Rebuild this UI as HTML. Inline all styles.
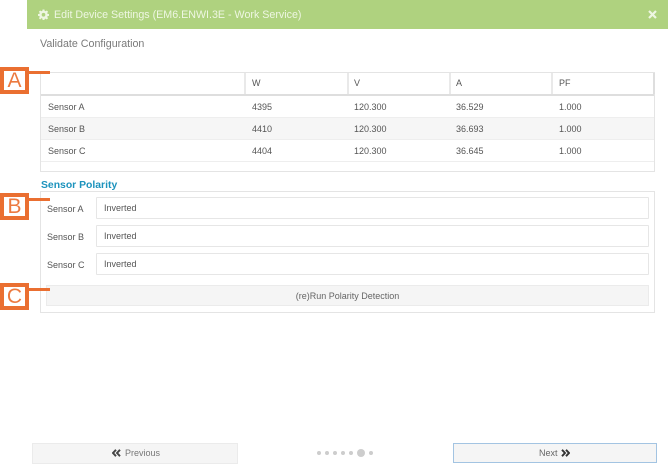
<!DOCTYPE html>
<html><head><meta charset="utf-8">
<style>
html,body{margin:0;padding:0;background:#fff}
body{width:668px;height:464px;position:relative;overflow:hidden;font-family:"Liberation Sans",sans-serif;font-size:9px;color:#555}
div,span{position:absolute;box-sizing:border-box;white-space:nowrap}
svg{position:absolute}
.hd{background:#afd27f;left:27px;top:0;width:641px;height:29px}
.l{background:#e9e9e9}
.t{line-height:12px}
.tag{left:0;width:29px;height:27px;border:4px solid #ea6f31;background:#fff;color:#ec7a40;font-size:21px;line-height:20px;text-align:center}
.tick{left:29px;width:21px;height:3px;background:#ea6f31}
.inp{left:96px;width:553px;height:22px;border:1px solid #e6e6e6;border-radius:1px;background:#fff;padding-left:7px;line-height:21px}
.btn{background:#f5f5f5;border:1px solid #ebebeb;text-align:center;color:#666}
.dot{width:4px;height:4px;border-radius:50%;background:#cdcdcd;top:451px}
</style></head><body>
<div class="hd"></div>
<svg style="left:38px;top:9px" width="11" height="11" viewBox="0 0 24 24"><path fill="#eef6e2" fill-rule="evenodd" d="M10 1h4l.6 3.2 1.900.8L19.200 3.200 22 6l-1.900 2.700.8 1.900L24 11v4l-3.100.5-.8 1.900L22 20l-2.800 2.800-2.700-1.900-1.900.8L14 24h-4l-.6-3.300-1.900-.8L4.800 22.800 2 20l1.900-2.600-.8-1.900L0 15v-4l3.100-.4.800-1.900L2 6l2.800-2.800L7.500 5l1.900-.8zM12 8.500a4 4 0 1 0 0 8 4 4 0 0 0 0-8z"/></svg>
<div class="t" style="left:54px;top:8px;font-size:10.7px;line-height:13px;color:#eef6e2;padding-top:1px">Edit Device Settings (EM6.ENWI.3E - Work Service)</div>
<svg style="left:648px;top:10px" width="9" height="9" viewBox="0 0 9 9"><path d="M1 1L8 8M8 1L1 8" stroke="#eef6e2" stroke-width="2.200"/></svg>
<div class="t" style="left:40px;top:38px;font-size:10.7px;line-height:13px;color:#7a7a7a">Validate Configuration</div>

<div style="left:40px;top:72px;width:615px;height:100px;border:1px solid #e4e4e4"></div>
<div style="left:41px;top:117px;width:613px;height:22px;background:#f6f6f6"></div>
<div style="left:41px;top:94px;width:613px;height:2px;background:#dedede"></div>
<div class="l" style="left:41px;top:117px;width:613px;height:1px;background:#eee"></div>
<div class="l" style="left:41px;top:139px;width:613px;height:1px;background:#eee"></div>
<div class="l" style="left:41px;top:161px;width:613px;height:1px;background:#eee"></div>
<div class="l" style="left:244px;top:73px;width:2px;height:21px"></div>
<div class="l" style="left:347px;top:73px;width:2px;height:21px"></div>
<div class="l" style="left:449px;top:73px;width:2px;height:21px"></div>
<div class="l" style="left:551px;top:73px;width:2px;height:21px"></div>
<div class="l" style="left:653px;top:73px;width:2px;height:21px;background:#dedede"></div>

<div class="t" style="left:252px;top:77px">W</div><div class="t" style="left:354px;top:77px">V</div><div class="t" style="left:456px;top:77px">A</div><div class="t" style="left:559px;top:77px">PF</div>

<div class="t" style="left:48px;top:101px">Sensor A</div><div class="t" style="left:252px;top:101px">4395</div><div class="t" style="left:354px;top:101px">120.300</div><div class="t" style="left:456px;top:101px">36.529</div><div class="t" style="left:559px;top:101px">1.000</div>
<div class="t" style="left:48px;top:123px">Sensor B</div><div class="t" style="left:252px;top:123px">4410</div><div class="t" style="left:354px;top:123px">120.300</div><div class="t" style="left:456px;top:123px">36.693</div><div class="t" style="left:559px;top:123px">1.000</div>
<div class="t" style="left:48px;top:145px">Sensor C</div><div class="t" style="left:252px;top:145px">4404</div><div class="t" style="left:354px;top:145px">120.300</div><div class="t" style="left:456px;top:145px">36.645</div><div class="t" style="left:559px;top:145px">1.000</div>

<div class="t" style="left:41px;top:180px;font-size:10.4px;font-weight:bold;color:#1d93bd">Sensor Polarity</div>
<div style="left:40px;top:191px;width:615px;height:122px;border:1px solid #e4e4e4"></div>

<div class="t" style="left:47px;top:203px">Sensor A</div><div class="inp" style="top:197px">Inverted</div>
<div class="t" style="left:47px;top:231px">Sensor B</div><div class="inp" style="top:225px">Inverted</div>
<div class="t" style="left:47px;top:259px">Sensor C</div><div class="inp" style="top:253px">Inverted</div>
<div class="btn" style="left:46px;top:285px;width:603px;height:21px;line-height:20px">(re)Run Polarity Detection</div>

<div class="tick" style="top:71px"></div><div class="tag" style="top:67px">A</div>
<div class="tick" style="top:198px"></div><div class="tag" style="top:193px">B</div>
<div class="tick" style="top:288px"></div><div class="tag" style="top:283px">C</div>

<div class="btn" style="left:32px;top:443px;width:206px;height:21px"></div>
<svg style="left:112px;top:449px" width="9" height="8" viewBox="0 0 9 8"><path d="M4 .8L1 4l3 3.200M8 .8L5 4l3 3.200" fill="none" stroke="#444" stroke-width="1.900"/></svg>
<div class="t" style="left:125px;top:447px;color:#777">Previous</div>

<div class="dot" style="left:317px"></div><div class="dot" style="left:325px"></div><div class="dot" style="left:333px"></div><div class="dot" style="left:341px"></div><div class="dot" style="left:349px"></div>
<div class="dot" style="left:357px;top:449px;width:8px;height:8px"></div><div class="dot" style="left:369px"></div>

<div class="btn" style="left:453px;top:443px;width:204px;height:20px;border:1px solid #a3c4e2"></div>
<div class="t" style="left:539px;top:447px;color:#666">Next</div>
<svg style="left:561px;top:449px" width="9" height="8" viewBox="0 0 9 8"><path d="M1 .8L4 4 1 7.200M5 .8L8 4 5 7.200" fill="none" stroke="#333" stroke-width="1.900"/></svg>
</body></html>
